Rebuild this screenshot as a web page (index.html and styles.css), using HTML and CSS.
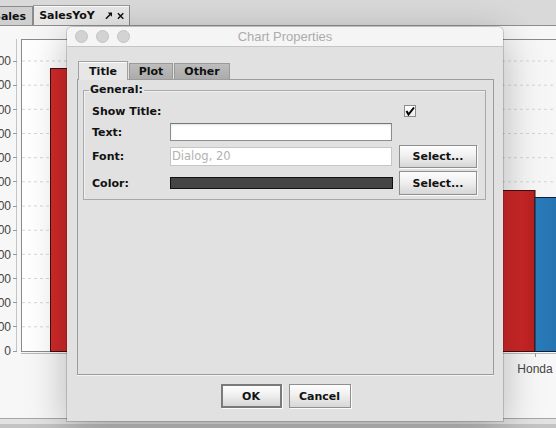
FILE: index.html
```html
<!DOCTYPE html>
<html lang="en">
<head>
    <meta charset="UTF-8">
    <title>Chart Properties</title>
    <link rel="stylesheet" href="styles.css">
</head>
<body>
<div class="app">

    <div class="doc-tabs">
        <div class="doc-tab">Sales</div>
        <div class="doc-tab active">
            <span>SalesYoY</span>
            <svg class="tab-icon undock" width="8" height="8" viewBox="0 0 8 8">
                <polygon points="3,0 8,0 8,5" fill="#111"/>
                <line x1="6" y1="2" x2="1" y2="7" stroke="#111" stroke-width="1.7"/>
            </svg>
            <svg class="tab-icon" width="8" height="8" viewBox="0 0 8 8">
                <path d="M1 1 L7 7 M7 1 L1 7" stroke="#111" stroke-width="1.6"/>
            </svg>
        </div>
    </div>

    <div class="chart-panel">
        <svg class="chart" width="556" height="392" viewBox="0 0 556 392">
            <defs>
                <linearGradient id="plotbg" x1="0" x2="1" y1="0" y2="0">
                    <stop offset="0" stop-color="#ffffff"/>
                    <stop offset="1" stop-color="#f6f6f6"/>
                </linearGradient>
                <linearGradient id="red" x1="0" x2="1" y1="0" y2="0">
                    <stop offset="0" stop-color="#d42a2a"/>
                    <stop offset="0.7" stop-color="#cc2626"/>
                    <stop offset="1" stop-color="#b52121"/>
                </linearGradient>
                <linearGradient id="blue" x1="0" x2="1" y1="0" y2="0">
                    <stop offset="0" stop-color="#2b7dbd"/>
                    <stop offset="1" stop-color="#2470ab"/>
                </linearGradient>
            </defs>
            <rect x="21.5" y="13.5" width="540" height="312" fill="url(#plotbg)" stroke="#8a8a8a"/>
            <g stroke="#d6d6d6" stroke-dasharray="3 3">
                <line x1="22" x2="556" y1="35" y2="35"/>
                <line x1="22" x2="556" y1="59.2" y2="59.2"/>
                <line x1="22" x2="556" y1="83.3" y2="83.3"/>
                <line x1="22" x2="556" y1="107.5" y2="107.5"/>
                <line x1="22" x2="556" y1="131.7" y2="131.7"/>
                <line x1="22" x2="556" y1="155.8" y2="155.8"/>
                <line x1="22" x2="556" y1="180" y2="180"/>
                <line x1="22" x2="556" y1="204.2" y2="204.2"/>
                <line x1="22" x2="556" y1="228.3" y2="228.3"/>
                <line x1="22" x2="556" y1="252.5" y2="252.5"/>
                <line x1="22" x2="556" y1="276.7" y2="276.7"/>
                <line x1="22" x2="556" y1="300.8" y2="300.8"/>
            </g>
            <line x1="16.5" x2="16.5" y1="13" y2="326" stroke="#c4c4c4"/>
            <g stroke="#999">
                <line x1="13" x2="17" y1="35.5" y2="35.5"/>
                <line x1="13" x2="17" y1="59.5" y2="59.5"/>
                <line x1="13" x2="17" y1="83.5" y2="83.5"/>
                <line x1="13" x2="17" y1="107.5" y2="107.5"/>
                <line x1="13" x2="17" y1="131.5" y2="131.5"/>
                <line x1="13" x2="17" y1="155.5" y2="155.5"/>
                <line x1="13" x2="17" y1="180.5" y2="180.5"/>
                <line x1="13" x2="17" y1="204.5" y2="204.5"/>
                <line x1="13" x2="17" y1="228.5" y2="228.5"/>
                <line x1="13" x2="17" y1="252.5" y2="252.5"/>
                <line x1="13" x2="17" y1="276.5" y2="276.5"/>
                <line x1="13" x2="17" y1="300.5" y2="300.5"/>
                <line x1="13" x2="17" y1="325.5" y2="325.5"/>
            </g>
            <g class="axis-label" text-anchor="end">
                <text x="11" y="39">1,200</text>
                <text x="11" y="63">1,100</text>
                <text x="11" y="88">1,000</text>
                <text x="11" y="112">900</text>
                <text x="11" y="136">800</text>
                <text x="11" y="160">700</text>
                <text x="11" y="184">600</text>
                <text x="11" y="208">500</text>
                <text x="11" y="233">400</text>
                <text x="11" y="257">300</text>
                <text x="11" y="281">200</text>
                <text x="11" y="305">100</text>
                <text x="11" y="329">0</text>
            </g>
            <rect x="50.5" y="42.5" width="40" height="283" fill="url(#red)" stroke="#3a1010"/>
            <rect x="490.5" y="164.5" width="44.5" height="161" fill="url(#red)" stroke="#3a1010"/>
            <rect x="535" y="171.5" width="30" height="154" fill="url(#blue)" stroke="#10202e"/>
            <line x1="21" x2="556" y1="327.5" y2="327.5" stroke="#b8b8b8"/>
            <line x1="535.5" x2="535.5" y1="327" y2="331" stroke="#999"/>
            <text class="axis-label" x="535" y="347" text-anchor="middle">Honda</text>
        </svg>
    </div>

    <div class="status-strip"></div>

    <div class="dialog">
        <div class="dialog-titlebar">
            <div class="lights">
                <span class="light"></span>
                <span class="light"></span>
                <span class="light"></span>
            </div>
            <div class="dialog-title">Chart Properties</div>
        </div>

        <div class="dialog-body">
            <div class="tabs">
                <div class="tab active">Title</div>
                <div class="tab">Plot</div>
                <div class="tab">Other</div>
            </div>

            <div class="tab-panel">
                <fieldset class="group">
                    <legend>General:</legend>
                    <div class="form-grid">
                        <label>Show Title:</label>
                        <span></span>
                        <span class="checkbox">
                            <svg width="10" height="10" viewBox="0 0 10 10">
                                <polyline points="1.5,5 3.5,8.5 9,1.5" fill="none" stroke="#000" stroke-width="2"/>
                            </svg>
                        </span>

                        <label>Text:</label>
                        <div class="field"></div>
                        <span></span>

                        <label>Font:</label>
                        <div class="field disabled">Dialog, 20</div>
                        <button class="btn">Select...</button>

                        <label>Color:</label>
                        <div class="swatch"></div>
                        <button class="btn tall">Select...</button>
                    </div>
                </fieldset>
            </div>

            <div class="dialog-buttons">
                <button class="btn default">OK</button>
                <button class="btn cancel">Cancel</button>
            </div>
        </div>
    </div>

</div>
</body>
</html>
```

FILE: styles.css
```css
body {
    margin: 0;
    font-family: "DejaVu Sans", sans-serif;
    background-color: #d8d8d8;
}
.app {
    position: relative;
    width: 556px;
    height: 428px;
    overflow: hidden;
}

/* document tabs along the top */
.doc-tabs {
    height: 26px;
    box-sizing: border-box;
    display: flex;
    align-items: flex-end;
    background-color: #d9d9d9;
    border-bottom: 1px solid #8e8e8e;
}
.doc-tab {
    height: 18px;
    margin-left: -13px;
    padding: 0 6px 0 5px;
    display: flex;
    align-items: center;
    font-size: 11px;
    font-weight: bold;
    color: #111;
    background-color: #cfcfcf;
    border: 1px solid #8a8a8a;
    border-bottom: none;
}
.doc-tab.active {
    height: 20px;
    margin-left: 0;
    width: 97px;
    box-sizing: border-box;
    padding: 0 5px;
    background-color: #e8e8e8;
    border-top-color: #9a9a9a;
    box-shadow: inset 0 1px 0 #fafafa;
}
.undock {
    margin-left: 10px;
}
.tab-icon + .tab-icon {
    margin-left: 5px;
}

/* chart behind the dialog */
.chart-panel {
    height: 392px;
    background-color: #f7f7f7;
}
.chart {
    display: block;
}
.axis-label {
    font-family: "Liberation Sans", sans-serif;
    font-size: 12px;
    fill: #444;
}
.status-strip {
    height: 10px;
    box-sizing: border-box;
    border-top: 1px solid #a6a6a6;
    background: linear-gradient(#e2e2e2 0, #e2e2e2 5px, #c4c4c4 5px);
}

/* the dialog window */
.dialog {
    position: absolute;
    left: 67px;
    top: 27px;
    width: 436px;
    height: 394px;
    background-color: #e1e1e1;
    border-radius: 5px 5px 0 0;
    box-shadow: 0 0 0 1px rgba(0, 0, 0, 0.16), 0 10px 40px rgba(0, 0, 0, 0.28);
}
.dialog-titlebar {
    position: relative;
    height: 19px;
    background-color: #f5f5f5;
    border-bottom: 1px solid #c6c6c6;
    border-radius: 5px 5px 0 0;
    display: flex;
    align-items: center;
    justify-content: center;
}
.lights {
    position: absolute;
    left: 8px;
    top: 3px;
    display: flex;
    gap: 8px;
}
.light {
    width: 11px;
    height: 11px;
    border-radius: 50%;
    background-color: #d3d3d3;
    border: 0.5px solid #c3c3c3;
}
.dialog-title {
    font-family: "Liberation Sans", sans-serif;
    font-size: 13px;
    color: #acacac;
}
.dialog-body {
    padding: 14px 9px 0 10px;
}

/* Title / Plot / Other tabs */
.tabs {
    display: flex;
    align-items: flex-end;
    height: 18px;
    margin-left: 1px;
}
.tab {
    height: 16px;
    box-sizing: border-box;
    display: flex;
    align-items: center;
    justify-content: center;
    font-size: 11px;
    font-weight: bold;
    color: #111;
    background: linear-gradient(#bdbdbd, #ababab);
    border: 1px solid #9a9a9a;
    border-bottom: none;
    margin-right: 1px;
}
.tab:nth-child(2) { width: 44px; }
.tab:nth-child(3) { width: 56px; }
.tab.active {
    width: 50px;
    height: 19px;
    margin-bottom: -1px;
    padding-top: 1px;
    position: relative;
    background: #e7e7e7;
    border-color: #a0a0a0;
    box-shadow: inset 0 1px 0 #fbfbfb;
}
.tab-panel {
    height: 296px;
    box-sizing: border-box;
    border: 1px solid #9c9c9c;
    box-shadow: 0 1px 0 #f4f4f4;
    padding: 2px 7px 0 5px;
}

/* General group */
.group {
    margin: 0;
    padding: 3px 8px 2px 8px;
    border: 1px solid #a9a9a9;
    box-shadow: inset 1px 1px 0 #f0f0f0;
}
.group legend {
    padding: 0 1px;
    margin-left: -3px;
    font-size: 11px;
    font-weight: bold;
    line-height: 16px;
    color: #111;
}
.form-grid {
    display: grid;
    grid-template-columns: 71px 222px 78px;
    grid-template-rows: 20px 22px 26px 28px;
    column-gap: 7px;
    align-items: center;
}
.form-grid label {
    font-size: 11px;
    font-weight: bold;
    color: #111;
    white-space: nowrap;
}
.checkbox {
    justify-self: start;
    margin-left: 5px;
    width: 12px;
    height: 12px;
    box-sizing: border-box;
    border: 1px solid #8c8c8c;
    background: linear-gradient(#ffffff, #ececec);
    display: flex;
    align-items: center;
    justify-content: center;
}
.field {
    height: 18px;
    box-sizing: border-box;
    background-color: #fff;
    border: 1px solid #8e8e8e;
    border-top-color: #777;
    box-shadow: inset 0 1px 2px rgba(0, 0, 0, 0.12);
}
.field.disabled {
    height: 19px;
    border-color: #c6c6c6;
    box-shadow: none;
    padding-left: 1px;
    font-size: 11.5px;
    line-height: 17px;
    color: #b2b2b2;
}
.swatch {
    height: 12px;
    box-sizing: border-box;
    width: 223px;
    background-color: #454545;
    border: 1px solid #111;
}
.btn {
    height: 23px;
    padding: 0;
    box-sizing: border-box;
    font-family: "DejaVu Sans", sans-serif;
    font-size: 11px;
    font-weight: bold;
    color: #111;
    background: linear-gradient(#fdfdfd, #f0f0f0 45%, #d6d6d6);
    border: 1px solid #8f8f8f;
    box-shadow: 1px 1px 0 #fafafa;
}
.btn.tall {
    height: 24px;
}

/* OK / Cancel */
.dialog-buttons {
    display: flex;
    justify-content: center;
    gap: 7px;
    padding-top: 9px;
}
.dialog-buttons .btn {
    height: 24px;
}
.btn.default {
    width: 61px;
    border: 2px solid #7a7a7a;
}
.btn.cancel {
    width: 62px;
}
```
